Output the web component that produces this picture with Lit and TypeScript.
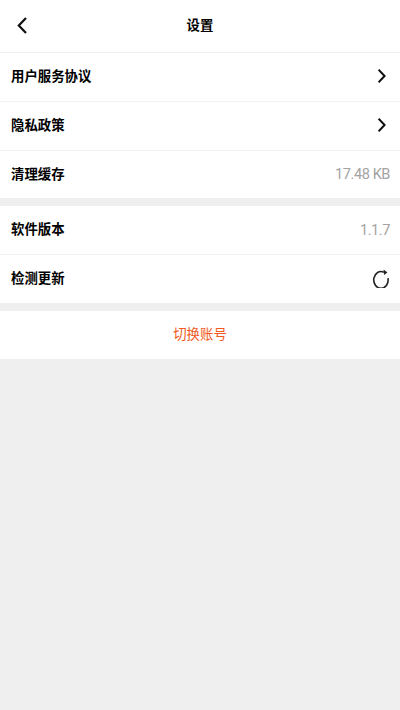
import { LitElement, html, css } from "lit";
import { customElement } from "lit/decorators.js";

const chevron = html`<svg class="chev" viewBox="0 0 12 16" width="12" height="16"><path d="M0.6 1.6 L6.6 8 L0.6 14.4" fill="none" stroke="#111" stroke-width="2"/></svg>`;
const back = html`<svg viewBox="0 0 14 22" width="14" height="22"><path d="M10 3 L2.8 10.5 L10 18" fill="none" stroke="#111" stroke-width="2.2"/></svg>`;
const refresh = html`<svg viewBox="0 0 20 20" width="20" height="20"><path d="M13.8 4.2 A7.2 8.4 0 1 0 18 10.2" fill="none" stroke="#222" stroke-width="1.6"/><path d="M13.6 1.4 L17.4 4.4 L14 7 Z" fill="#222"/></svg>`;

@customElement("app-root")
export class AppRoot extends LitElement {
  static styles = css`
    :host { display: block; width: 400px; height: 710px; background: #efefef; font-family: "Noto Sans CJK SC", "Roboto", sans-serif; }
    .top { height: 52px; background: #fff; display: flex; align-items: center; justify-content: center; position: relative; border-bottom: 1px solid #f0f0f0; }
    .top h1 { margin: 0 0 4px; font-size: 13.4px; font-weight: 700; color: #000; }
    .back { position: absolute; left: 16px; top: 15px; line-height: 0; }
    .group { background: #fff; margin-bottom: 8px; }
    .row { box-sizing: border-box; height: 49px; padding: 0 10px 0 11px; display: flex; align-items: center; justify-content: space-between; border-bottom: 1px solid #f3f3f3; }
    .row:last-child { border-bottom: 0; height: 48px; }
    .row.short { height: 47px; }
    .label { font-size: 13.4px; font-weight: 700; color: #000; padding-bottom: 4px; }
    .val { font-family: Roboto, sans-serif; font-size: 14.6px; letter-spacing: -0.45px; color: #a3a3a3; padding-bottom: 1px; }
    .ico { line-height: 0; display: flex; padding-bottom: 2px; }
    .switch { height: 48px; background: #fff; display: flex; align-items: center; justify-content: center; color: #f25a22; font-size: 13.4px; }
    .switch span { padding-bottom: 5px; }
  `;
  render() {
    return html`
      <div class="top"><span class="back">${back}</span><h1>设置</h1></div>
      <div class="group">
        <div class="row"><span class="label">用户服务协议</span><span class="ico">${chevron}</span></div>
        <div class="row"><span class="label">隐私政策</span><span class="ico">${chevron}</span></div>
        <div class="row short"><span class="label">清理缓存</span><span class="val">17.48 KB</span></div>
      </div>
      <div class="group">
        <div class="row"><span class="label">软件版本</span><span class="val">1.1.7</span></div>
        <div class="row"><span class="label">检测更新</span><span class="ico">${refresh}</span></div>
      </div>
      <div class="switch"><span>切换账号</span></div>
    `;
  }
}
